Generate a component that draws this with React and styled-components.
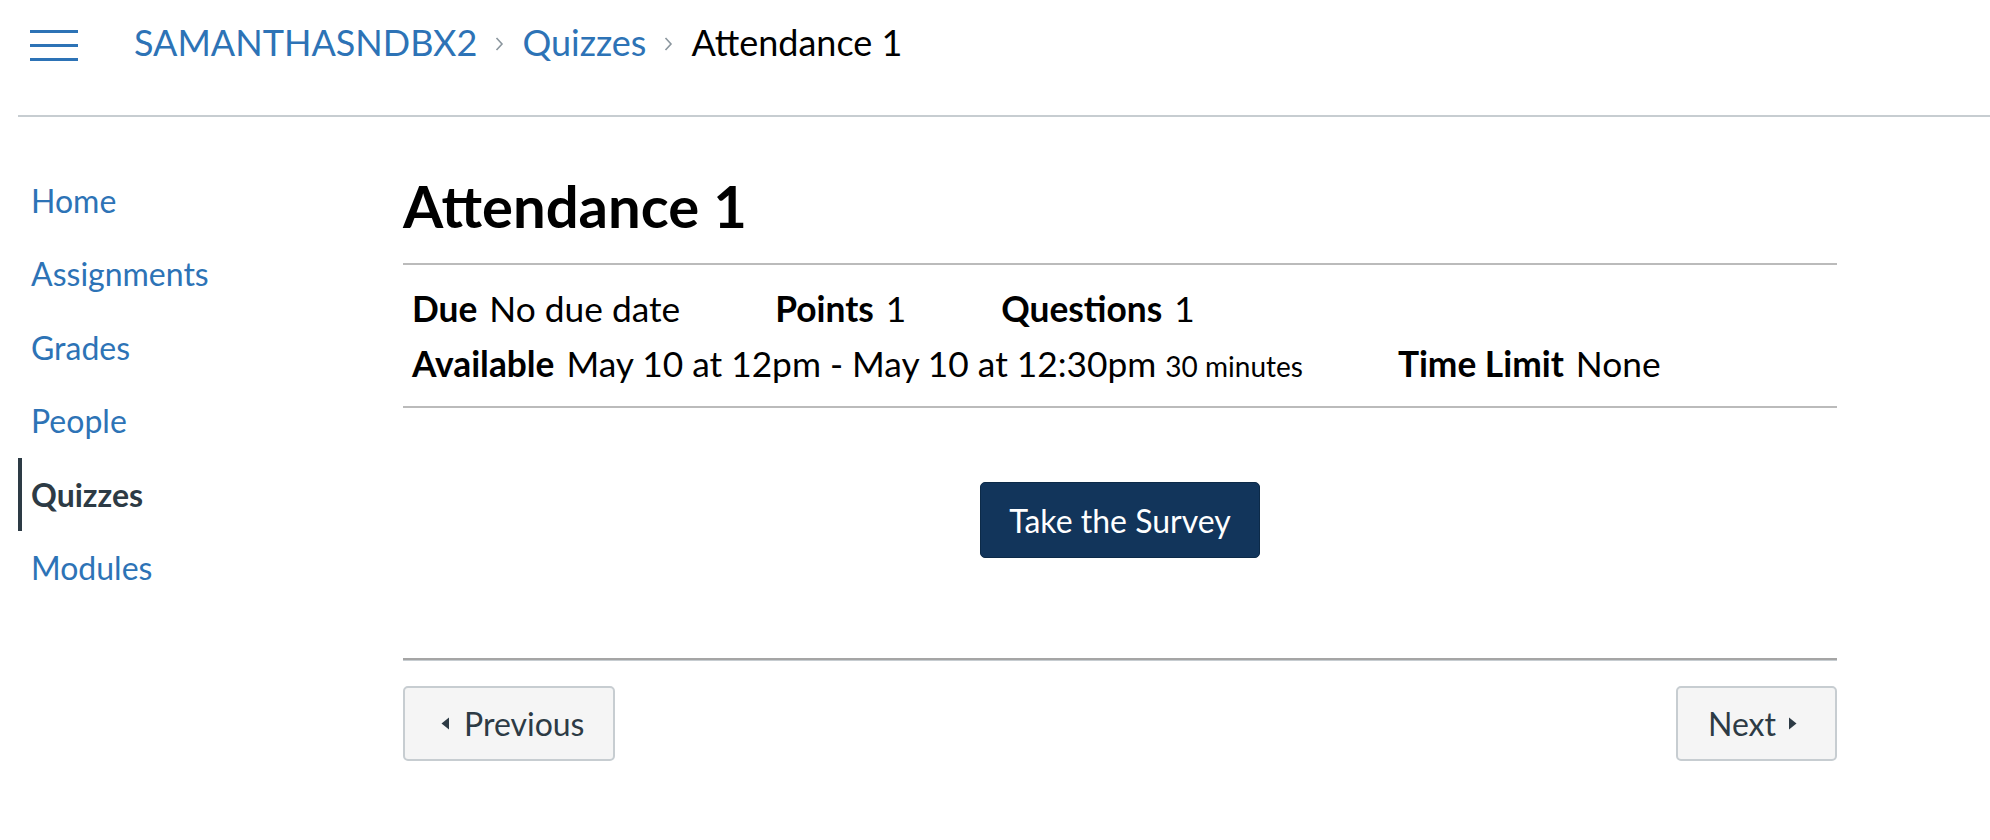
import React from "react";
import styled, { createGlobalStyle } from "styled-components";

const Global = createGlobalStyle`
  html, body { margin: 0; padding: 0; background: #fff; }
  body { font-family: Lato, "Open Sans", sans-serif; color: #000; }
  * { box-sizing: border-box; }
`;

const Page = styled.div`
  width: 1990px;
  min-height: 840px;
`;

const Header = styled.header`
  margin-left: 18px;
  height: 117px;
  border-bottom: 2px solid #c7cdd1;
  display: flex;
  align-items: flex-start;
  padding-top: 30px;
`;

const Hamburger = styled.button`
  width: 48px;
  height: 31px;
  margin-left: 12px;
  padding: 0;
  border: 0;
  background: none;
  display: flex;
  flex-direction: column;
  justify-content: space-between;
  cursor: pointer;
  span {
    display: block;
    height: 3px;
    background: #2d73b6;
  }
`;

const Crumbs = styled.nav`
  display: flex;
  align-items: center;
  margin-left: 56px;
  margin-top: -9.5px;
  font-size: 36px;
  line-height: 1.2;
`;

const Crumb = styled.a`
  color: ${(p) => (p.$current ? "#000" : "#2d73b6")};
  text-decoration: none;
`;

const Sep = styled.svg`
  width: 10px;
  height: 16px;
  margin: 4px 18px 0 17px;
  flex: none;
`;

const Chevron = () => (
  <Sep viewBox="0 0 10 16" aria-hidden="true">
    <path d="M2.5 2 L8 8 L2.5 14" fill="none" stroke="#8b969e" strokeWidth="1.6" />
  </Sep>
);

const Body = styled.div`
  display: flex;
  align-items: flex-start;
`;

const Side = styled.ul`
  list-style: none;
  margin: 0;
  padding: 47px 0 0 18px;
  width: 403px;
  flex: none;
`;

const NavItem = styled.li`
  font-size: 32px;
  line-height: 73.4px;
  padding-left: ${(p) => (p.$active ? "9px" : "13px")};
  border-left: ${(p) => (p.$active ? "4px solid #2d3b45" : "0")};
  color: ${(p) => (p.$active ? "#2d3b45" : "#2d73b6")};
  font-weight: ${(p) => (p.$active ? 700 : 400)};
`;

const Main = styled.main`
  width: 1434px;
  padding-top: 55px;
`;

const Title = styled.h1`
  margin: 0;
  font-size: 58px;
  font-weight: 700;
  line-height: 67px;
  padding-bottom: 24px;
  border-bottom: 2px solid #bbbbbb;
`;

const Details = styled.ul`
  list-style: none;
  margin: 0;
  padding: 16px 0 15px 9px;
  display: flex;
  flex-wrap: wrap;
  column-gap: 95px;
  border-bottom: 2px solid #bbbbbb;
  font-size: 35.3px;
  line-height: 55px;
`;

const Detail = styled.li`
  white-space: nowrap;
`;

const Label = styled.span`
  font-weight: 700;
  margin-right: 12px;
`;

const Small = styled.span`
  font-size: 28px;
  line-height: 1;
  margin-left: 9px;
`;

const Break = styled.li`
  flex-basis: 100%;
  height: 0;
`;

const Actions = styled.div`
  display: flex;
  justify-content: center;
  padding: 74px 0 100px;
  border-bottom: 2px solid #a5a5a5;
  box-shadow: 0 1px 0 #c7cdd1;
`;

const Primary = styled.button`
  width: 280px;
  height: 76px;
  border: 1px solid #0c2a48;
  border-radius: 5px;
  background: #12355b;
  color: #fff;
  font-family: inherit;
  font-size: 32px;
  cursor: pointer;
`;

const Pager = styled.div`
  display: flex;
  justify-content: space-between;
  padding-top: 26px;
`;

const PageButton = styled.button`
  height: 75px;
  display: flex;
  align-items: center;
  gap: ${(p) => (p.$next ? "12px" : "14px")};
  padding: ${(p) => (p.$next ? "0 38px 0 30px" : "0 29px 0 36px")};
  background: #f5f5f5;
  border: 2px solid #c7cdd1;
  border-radius: 5px;
  color: #2d3b45;
  font-family: inherit;
  font-size: 32px;
  cursor: pointer;
`;

const Tri = ({ dir }) => (
  <svg width="9" height="13" viewBox="0 0 9 13" aria-hidden="true">
    {dir === "left" ? (
      <path d="M8 0.5 L0.5 6.5 L8 12.5 Z" fill="#2d3b45" />
    ) : (
      <path d="M1 0.5 L8.5 6.5 L1 12.5 Z" fill="#2d3b45" />
    )}
  </svg>
);

const nav = ["Home", "Assignments", "Grades", "People", "Quizzes", "Modules"];

export default function App() {
  return (
    <Page>
      <Global />
      <Header>
        <Hamburger aria-label="Menu">
          <span />
          <span />
          <span />
        </Hamburger>
        <Crumbs>
          <Crumb href="#">SAMANTHASNDBX2</Crumb>
          <Chevron />
          <Crumb href="#">Quizzes</Crumb>
          <Chevron />
          <Crumb $current>Attendance 1</Crumb>
        </Crumbs>
      </Header>
      <Body>
        <Side>
          {nav.map((n) => (
            <NavItem key={n} $active={n === "Quizzes"}>
              {n}
            </NavItem>
          ))}
        </Side>
        <Main>
          <Title>Attendance 1</Title>
          <Details>
            <Detail>
              <Label>Due</Label>No due date
            </Detail>
            <Detail>
              <Label>Points</Label>1
            </Detail>
            <Detail>
              <Label>Questions</Label>1
            </Detail>
            <Break />
            <Detail>
              <Label>Available</Label>May 10 at 12pm - May 10 at 12:30pm
              <Small>30 minutes</Small>
            </Detail>
            <Detail>
              <Label>Time Limit</Label>None
            </Detail>
          </Details>
          <Actions>
            <Primary>Take the Survey</Primary>
          </Actions>
          <Pager>
            <PageButton>
              <Tri dir="left" />
              Previous
            </PageButton>
            <PageButton $next>
              Next
              <Tri dir="right" />
            </PageButton>
          </Pager>
        </Main>
      </Body>
    </Page>
  );
}
